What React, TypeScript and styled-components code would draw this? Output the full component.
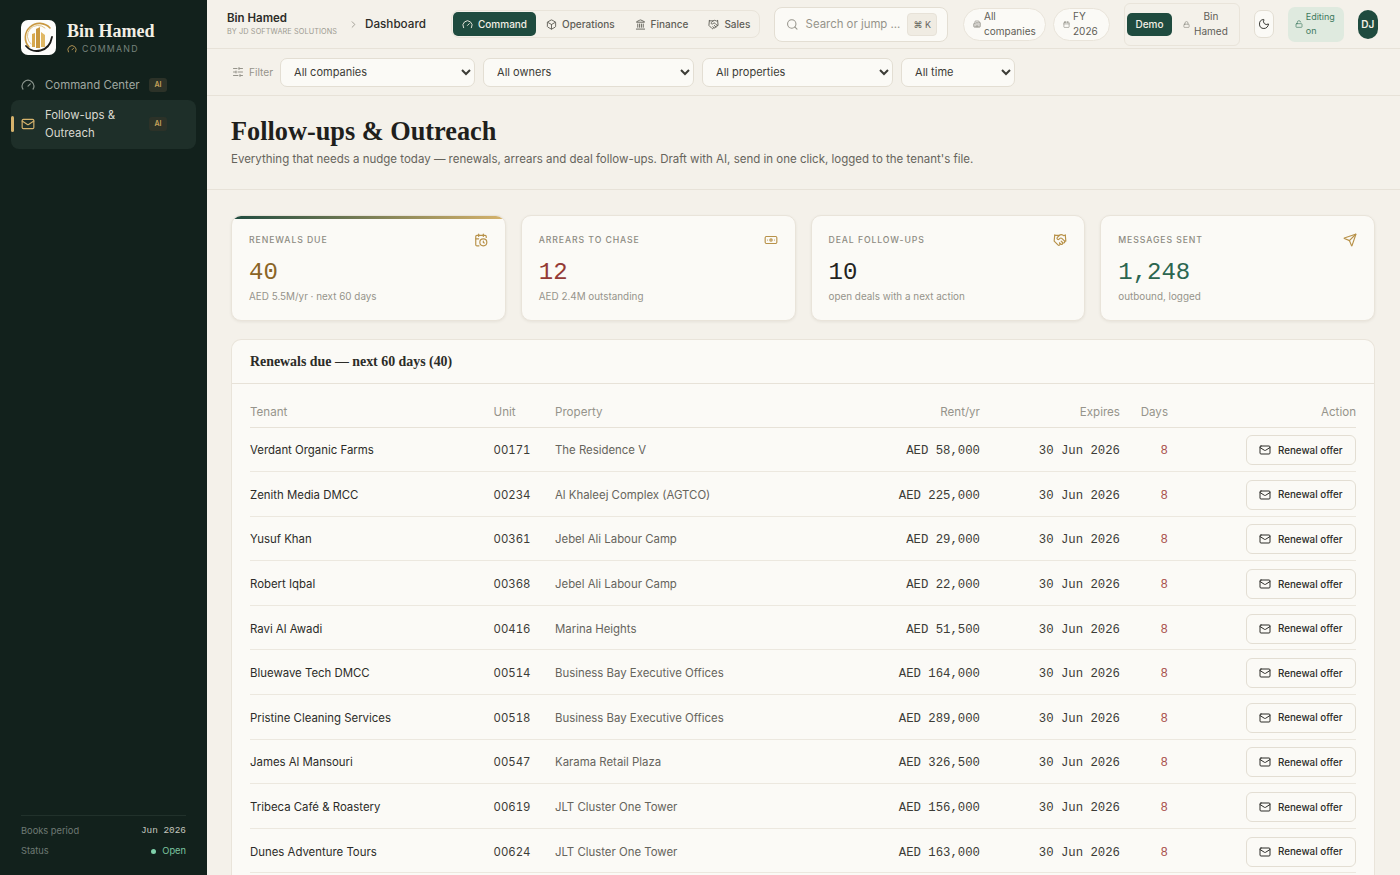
// libs
import React from 'react';
import styled, { createGlobalStyle } from 'styled-components';
import {
  Banknote,
  Box,
  Building2,
  Calendar,
  CalendarClock,
  ChevronRight,
  Gauge,
  Handshake,
  Landmark,
  Lock,
  LockOpen,
  Mail,
  Moon,
  Search,
  Send,
  SlidersHorizontal,
} from 'lucide-react';

const SANS = '"Inter", "Noto Sans", sans-serif';
const MONO = '"Liberation Mono", monospace';
const SERIF = '"Liberation Serif", serif';

const GlobalStyle = createGlobalStyle`
  html, body {
    margin: 0;
    height: 100%;
    overflow: hidden;
    background: #f4f1ea;
    font-family: ${SANS};
  }
  * { box-sizing: border-box; }
`;

const Shell = styled.div`
  display: flex;
  height: 100vh;
  overflow: hidden;
`;

/* Sidebar */
const Sidebar = styled.aside`
  width: 207px;
  flex: none;
  background: #12211c;
  display: flex;
  flex-direction: column;
  padding: 20px 11px 17px;
`;

const Brand = styled.div`
  display: flex;
  align-items: center;
  gap: 11px;
  padding: 0 10px;
  margin-bottom: 19px;
`;

const LogoBox = styled.div`
  width: 35px;
  height: 35px;
  border-radius: 7px;
  background: #fdfdfb;
  flex: none;
  overflow: hidden;
`;

const BrandName = styled.div`
  font-family: ${SERIF};
  font-weight: 700;
  font-size: 18px;
  line-height: 22px;
  color: #f3efe5;
`;

const BrandSub = styled.div`
  display: flex;
  align-items: center;
  gap: 5px;
  font-size: 8.8px;
  letter-spacing: 1.25px;
  line-height: 13px;
  color: #76817b;
  svg { color: #c9a45c; }
`;

const NavItem = styled.div<{ $active?: boolean }>`
  position: relative;
  display: flex;
  align-items: center;
  gap: 10px;
  padding: ${(p) => (p.$active ? '6px 10px' : '2px 10px')};
  border-radius: 8px;
  font-size: 11.4px;
  line-height: 18.5px;
  color: ${(p) => (p.$active ? '#d9d8cf' : '#a0a8a1')};
  background: ${(p) => (p.$active ? '#1e2f29' : 'transparent')};
  margin-bottom: 3px;
  svg { flex: none; color: ${(p) => (p.$active ? '#d6b36c' : '#8b958e')}; }
  ${(p) =>
    p.$active &&
    `&::before {
      content: '';
      position: absolute;
      left: 0;
      top: 16px;
      width: 3px;
      height: 16px;
      border-radius: 2px;
      background: #d6b36c;
    }`}
`;

const NavLabel = styled.span`
  flex: 1;
`;

const AiTag = styled.span`
  flex: none;
  width: 18px;
  margin: 0 19px 0 -6px;
  font-size: 7px;
  font-weight: 600;
  text-align: center;
  padding: 3px 0;
  border-radius: 3px;
  line-height: 8px;
  color: #c9a45c;
  background: #2c3228;
`;

const SideFoot = styled.div`
  margin: auto 10px 0;
  border-top: 1px solid #21312b;
  padding-top: 8px;
  display: flex;
  flex-direction: column;
  gap: 6px;
`;

const SideRow = styled.div`
  display: flex;
  justify-content: space-between;
  align-items: center;
  font-size: 9.3px;
  line-height: 14px;
  color: #6f7a74;
`;

const SideValue = styled.span`
  font-family: ${MONO};
  font-size: 9.4px;
  color: #c4c7bf;
`;

const OpenValue = styled.span`
  display: flex;
  align-items: center;
  gap: 6px;
  color: #7cc4a0;
  &::before {
    content: '';
    width: 5px;
    height: 5px;
    border-radius: 50%;
    background: #7fd0aa;
  }
`;

/* Main column */
const Main = styled.main`
  flex: 1;
  min-width: 0;
  display: flex;
  flex-direction: column;
  overflow: hidden;
`;

const TopBar = styled.header`
  height: 49px;
  flex: none;
  display: flex;
  align-items: center;
  padding: 0 22px 0 20px;
  border-bottom: 1px solid #e7e2d8;
`;

const Crumb = styled.div`
  width: 122px;
  flex: none;
`;

const CrumbTitle = styled.div`
  font-size: 11.5px;
  font-weight: 600;
  line-height: 13px;
  color: #2c2c28;
`;

const CrumbSub = styled.div`
  margin-top: 2px;
  font-size: 7.3px;
  line-height: 9px;
  letter-spacing: 0.1px;
  white-space: nowrap;
  color: #9c9a91;
`;

const CrumbArrow = styled(ChevronRight)`
  color: #9c9a91;
  margin: 0 6px 0 -1px;
  flex: none;
`;

const PageName = styled.div`
  font-size: 11.7px;
  font-weight: 500;
  color: #2c2c28;
  width: 86px;
  flex: none;
`;

const Tabs = styled.nav`
  display: flex;
  align-items: center;
  height: 28px;
  padding: 1px;
  border: 1px solid #e9e4da;
  border-radius: 8px;
  flex: none;
  width: 309px;
`;

const Tab = styled.div<{ $active?: boolean }>`
  display: flex;
  align-items: center;
  gap: 5px;
  height: 24px;
  padding: 0 ${(p) => (p.$active ? '9px' : '10px')};
  border-radius: 5px;
  font-size: 10px;
  font-weight: 500;
  color: ${(p) => (p.$active ? '#f3efe5' : '#5f5e57')};
  background: ${(p) => (p.$active ? '#1f4b3f' : 'transparent')};
`;

const SearchBox = styled.div`
  width: 174px;
  height: 35px;
  flex: none;
  margin-left: 14px;
  display: flex;
  align-items: center;
  gap: 7px;
  padding: 0 10px 0 11px;
  background: #fbfaf6;
  border: 1px solid #e3ded3;
  border-radius: 8px;
  color: #96948b;
  font-size: 11.4px;
`;

const SearchText = styled.span`
  flex: 1;
  white-space: nowrap;
`;

const Kbd = styled.span`
  padding: 5px 5px;
  background: #f0ece3;
  border: 1px solid #e7e2d8;
  border-radius: 4px;
  font-size: 9px;
  line-height: 11px;
  color: #66645c;
  white-space: nowrap;
`;

const Pill = styled.div<{ $first?: boolean; $w: number }>`
  width: ${(p) => p.$w}px;
  height: 33px;
  flex: none;
  margin-left: ${(p) => (p.$first ? '15px' : '7px')};
  display: flex;
  align-items: center;
  gap: 3px;
  padding-left: 9px;
  background: #fbfaf6;
  border: 1px solid #e9e4da;
  border-radius: 17px;
  font-size: 10px;
  line-height: 15px;
  color: #5f5e57;
  svg { flex: none; color: #85837a; }
`;

const ModeGroup = styled.div`
  height: 43px;
  flex: none;
  margin-left: 14px;
  display: flex;
  align-items: center;
  padding: 0 11px 0 2px;
  gap: 11px;
  border: 1px solid #e9e4da;
  border-radius: 6px;
`;

const DemoButton = styled.div`
  height: 23px;
  width: 45px;
  display: flex;
  align-items: center;
  justify-content: center;
  border-radius: 5px;
  background: #1f4b3f;
  color: #f3efe5;
  font-size: 10px;
  font-weight: 500;
`;

const ModeLock = styled.div`
  display: flex;
  align-items: center;
  gap: 4px;
  font-size: 10px;
  line-height: 15px;
  text-align: center;
  color: #5f5e57;
  svg { flex: none; color: #85837a; }
`;

const IconButton = styled.div`
  width: 20px;
  height: 28px;
  flex: none;
  margin-left: 14px;
  display: flex;
  align-items: center;
  justify-content: center;
  background: #fbfaf6;
  border: 1px solid #e3ded3;
  border-radius: 7px;
  color: #3c3c36;
`;

const EditingTag = styled.div`
  height: 35px;
  width: 56px;
  flex: none;
  margin-left: 14px;
  padding: 0 6px 0 7px;
  display: flex;
  align-items: center;
  gap: 3px;
  border-radius: 7px;
  background: #dfeadf;
  color: #3f7a60;
  font-size: 9px;
  line-height: 14px;
`;

const Avatar = styled.div`
  width: 20px;
  height: 29px;
  flex: none;
  margin-left: 14px;
  display: flex;
  align-items: center;
  justify-content: center;
  border-radius: 10px;
  background: #1f4b3f;
  color: #f3efe5;
  font-size: 10px;
  font-weight: 600;
`;

const FilterBar = styled.div`
  height: 47px;
  flex: none;
  display: flex;
  align-items: center;
  gap: 8px;
  padding: 0 24px;
  border-bottom: 1px solid #e7e2d8;
`;

const FilterLabel = styled.div`
  display: flex;
  align-items: center;
  gap: 5px;
  margin: 0 -1px 0 1px;
  font-size: 10.2px;
  color: #96948b;
`;

const Select = styled.select<{ $w: number }>`
  width: ${(p) => p.$w}px;
  height: 29px;
  padding: 0 7px 0 9px;
  font-family: ${SANS};
  font-size: 11px;
  color: #3c3c36;
  background-color: #fbfaf6;
  border: 1px solid #e3ded3;
  border-radius: 7px;
`;

const PageHead = styled.div`
  height: 94px;
  flex: none;
  padding: 20px 24px 0;
  border-bottom: 1px solid #e7e2d8;
`;

const Title = styled.h1`
  margin: 0 0 2px;
  font-family: ${SERIF};
  font-weight: 700;
  font-size: 26.3px;
  line-height: 32px;
  color: #1f1f1c;
`;

const Subtitle = styled.p`
  margin: 0;
  font-size: 11.5px;
  line-height: 18px;
  color: #66645c;
`;

const Content = styled.div`
  flex: 1;
  min-height: 0;
  padding: 25px 25px 0 24px;
  display: flex;
  flex-direction: column;
  gap: 18px;
`;

const Stats = styled.section`
  display: grid;
  grid-template-columns: repeat(4, 1fr);
  gap: 15px;
`;

const StatCard = styled.div<{ $accent?: boolean }>`
  position: relative;
  height: 106px;
  padding: 19px 17px 0;
  background: #fbfaf6;
  border: 1px solid #e9e4da;
  border-radius: 10px;
  box-shadow: 0 1px 3px rgba(60, 50, 30, 0.08);
  overflow: hidden;
  ${(p) =>
    p.$accent &&
    `&::before {
      content: '';
      position: absolute;
      left: 0;
      right: 0;
      top: 0;
      height: 3px;
      background: linear-gradient(90deg, #1f4b3f, #d6b36c);
    }`}
`;

const StatTop = styled.div`
  display: flex;
  justify-content: space-between;
  align-items: flex-start;
  svg { color: #b8924a; margin-top: -2px; }
`;

const StatLabel = styled.div`
  font-size: 8.7px;
  font-weight: 500;
  letter-spacing: 0.9px;
  line-height: 11px;
  color: #8d8b82;
`;

const StatValue = styled.div<{ $color: string }>`
  margin-top: 11px;
  font-family: ${MONO};
  font-size: 24px;
  line-height: 30px;
  color: ${(p) => p.$color};
`;

const StatNote = styled.div`
  margin-top: 1px;
  font-size: 9.9px;
  line-height: 14px;
  color: #96948b;
`;

const TablePanel = styled.section`
  flex: 1;
  min-height: 0;
  background: #fbfaf6;
  border: 1px solid #e9e4da;
  border-bottom: 0;
  border-radius: 10px 10px 0 0;
  overflow: hidden;
`;

const PanelHead = styled.div`
  height: 44px;
  padding: 0 18px;
  display: flex;
  align-items: center;
  font-family: ${SERIF};
  font-weight: 700;
  font-size: 13.9px;
  color: #2c2c28;
  border-bottom: 1px solid #e7e2d8;
`;

const TableWrap = styled.div`
  padding: 9px 18px 0;
`;

const Table = styled.table`
  width: 100%;
  border-collapse: collapse;
  table-layout: fixed;
`;

const Th = styled.th<{ $right?: boolean; $w: number }>`
  width: ${(p) => p.$w}px;
  height: 34px;
  padding: 0 0 8px;
  vertical-align: bottom;
  font-size: 11.6px;
  font-weight: 400;
  color: #96948b;
  text-align: ${(p) => (p.$right ? 'right' : 'left')};
  border-bottom: 1px solid #e7e2d8;
`;

const Td = styled.td<{ $right?: boolean }>`
  height: 44.6px;
  padding: 2px 0 0;
  font-size: 11.4px;
  color: #66645c;
  text-align: ${(p) => (p.$right ? 'right' : 'left')};
  border-bottom: 1px solid #ece8df;
`;

const TenantCell = styled(Td)`
  color: #2c2c28;
`;

const UnitCell = styled(Td)`
  color: #3c3c36;
  font-variant-numeric: tabular-nums;
`;

const MonoCell = styled(Td)`
  padding-top: 4px;
  font-family: ${MONO};
  font-size: 12.3px;
  color: #3c3c36;
  white-space: nowrap;
`;

const DaysCell = styled(MonoCell)`
  color: #a8504c;
`;

const OfferButton = styled.button`
  display: inline-flex;
  align-items: center;
  gap: 7px;
  height: 30px;
  width: 110px;
  padding: 0 12px;
  vertical-align: middle;
  background: #fbfaf6;
  border: 1px solid #e3ded3;
  border-radius: 6px;
  font-family: ${SANS};
  font-size: 9.8px;
  font-weight: 500;
  white-space: nowrap;
  color: #2c2c28;
`;

const LogoMark = () => (
  <svg width="35" height="35" viewBox="0 0 35 35" fill="none">
    <path d="M8 27A13.5 13.5 0 0 1 29 8" stroke="#c9983f" strokeWidth="1.6" strokeLinecap="round" />
    <path d="M10 24A10 10 0 0 1 24 8" stroke="#e0c488" strokeWidth="1" strokeLinecap="round" />
    <path d="M5 26C12 34 28 33 31 17" stroke="#1c1c1a" strokeWidth="1.8" strokeLinecap="round" />
    <path d="M11 27V14l3-1v14z" fill="#d8a94f" />
    <path d="M15 28V9l4-2v21z" fill="#c9983f" />
    <path d="M20 27V12l4 3v12z" fill="#e0b865" />
  </svg>
);

const STATS = [
  { label: 'RENEWALS DUE', value: '40', note: 'AED 5.5M/yr · next 60 days', color: '#8a6426', Icon: CalendarClock, accent: true },
  { label: 'ARREARS TO CHASE', value: '12', note: 'AED 2.4M outstanding', color: '#943a35', Icon: Banknote },
  { label: 'DEAL FOLLOW-UPS', value: '10', note: 'open deals with a next action', color: '#24241f', Icon: Handshake },
  { label: 'MESSAGES SENT', value: '1,248', note: 'outbound, logged', color: '#2b6650', Icon: Send },
];

const RENEWALS = [
  ['Verdant Organic Farms', '00171', 'The Residence V', 'AED 58,000'],
  ['Zenith Media DMCC', '00234', 'Al Khaleej Complex (AGTCO)', 'AED 225,000'],
  ['Yusuf Khan', '00361', 'Jebel Ali Labour Camp', 'AED 29,000'],
  ['Robert Iqbal', '00368', 'Jebel Ali Labour Camp', 'AED 22,000'],
  ['Ravi Al Awadi', '00416', 'Marina Heights', 'AED 51,500'],
  ['Bluewave Tech DMCC', '00514', 'Business Bay Executive Offices', 'AED 164,000'],
  ['Pristine Cleaning Services', '00518', 'Business Bay Executive Offices', 'AED 289,000'],
  ['James Al Mansouri', '00547', 'Karama Retail Plaza', 'AED 326,500'],
  ['Tribeca Café & Roastery', '00619', 'JLT Cluster One Tower', 'AED 156,000'],
  ['Dunes Adventure Tours', '00624', 'JLT Cluster One Tower', 'AED 163,000'],
];

const App = () => (
  <Shell>
    <GlobalStyle />
    <Sidebar>
      <Brand>
        <LogoBox><LogoMark /></LogoBox>
        <div>
          <BrandName>Bin Hamed</BrandName>
          <BrandSub><Gauge size={10} />COMMAND</BrandSub>
        </div>
      </Brand>
      <NavItem>
        <Gauge size={14} />
        <NavLabel>Command Center</NavLabel>
        <AiTag>AI</AiTag>
      </NavItem>
      <NavItem $active>
        <Mail size={14} />
        <NavLabel>Follow-ups &amp; Outreach</NavLabel>
        <AiTag>AI</AiTag>
      </NavItem>
      <SideFoot>
        <SideRow>Books period<SideValue>Jun 2026</SideValue></SideRow>
        <SideRow>Status<OpenValue>Open</OpenValue></SideRow>
      </SideFoot>
    </Sidebar>

    <Main>
      <TopBar>
        <Crumb>
          <CrumbTitle>Bin Hamed</CrumbTitle>
          <CrumbSub>BY JD SOFTWARE SOLUTIONS</CrumbSub>
        </Crumb>
        <CrumbArrow size={11} />
        <PageName>Dashboard</PageName>
        <Tabs>
          <Tab $active><Gauge size={11} />Command</Tab>
          <Tab><Box size={11} />Operations</Tab>
          <Tab><Landmark size={11} />Finance</Tab>
          <Tab><Handshake size={11} />Sales</Tab>
        </Tabs>
        <SearchBox>
          <Search size={13} />
          <SearchText>Search or jump ...</SearchText>
          <Kbd>⌘ K</Kbd>
        </SearchBox>
        <Pill $first $w={83}><Building2 size={8} /><span>All<br />companies</span></Pill>
        <Pill $w={57}><Calendar size={7} /><span>FY<br />2026</span></Pill>
        <ModeGroup>
          <DemoButton>Demo</DemoButton>
          <ModeLock><Lock size={7} /><span>Bin<br />Hamed</span></ModeLock>
        </ModeGroup>
        <IconButton><Moon size={12} /></IconButton>
        <EditingTag><LockOpen size={8} /><span>Editing<br />on</span></EditingTag>
        <Avatar>DJ</Avatar>
      </TopBar>

      <FilterBar>
        <FilterLabel><SlidersHorizontal size={12} />Filter</FilterLabel>
        <Select $w={195} defaultValue="All companies"><option>All companies</option></Select>
        <Select $w={211} defaultValue="All owners"><option>All owners</option></Select>
        <Select $w={191} defaultValue="All properties"><option>All properties</option></Select>
        <Select $w={114} defaultValue="All time"><option>All time</option></Select>
      </FilterBar>

      <PageHead>
        <Title>Follow-ups &amp; Outreach</Title>
        <Subtitle>Everything that needs a nudge today — renewals, arrears and deal follow-ups. Draft with AI, send in one click, logged to the tenant's file.</Subtitle>
      </PageHead>

      <Content>
        <Stats>
          {STATS.map(({ label, value, note, color, Icon, accent }) => (
            <StatCard key={label} $accent={accent}>
              <StatTop>
                <StatLabel>{label}</StatLabel>
                <Icon size={14} />
              </StatTop>
              <StatValue $color={color}>{value}</StatValue>
              <StatNote>{note}</StatNote>
            </StatCard>
          ))}
        </Stats>

        <TablePanel>
          <PanelHead>Renewals due — next 60 days (40)</PanelHead>
          <TableWrap>
            <Table>
              <thead>
                <tr>
                  <Th $w={243.5}>Tenant</Th>
                  <Th $w={61.5}>Unit</Th>
                  <Th $w={240}>Property</Th>
                  <Th $w={185} $right>Rent/yr</Th>
                  <Th $w={140} $right>Expires</Th>
                  <Th $w={48} $right>Days</Th>
                  <Th $w={188} $right>Action</Th>
                </tr>
              </thead>
              <tbody>
                {RENEWALS.map(([tenant, unit, property, rent]) => (
                  <tr key={unit}>
                    <TenantCell>{tenant}</TenantCell>
                    <UnitCell>{unit}</UnitCell>
                    <Td>{property}</Td>
                    <MonoCell $right>{rent}</MonoCell>
                    <MonoCell $right>30 Jun 2026</MonoCell>
                    <DaysCell $right>8</DaysCell>
                    <Td $right>
                      <OfferButton><Mail size={12} />Renewal offer</OfferButton>
                    </Td>
                  </tr>
                ))}
              </tbody>
            </Table>
          </TableWrap>
        </TablePanel>
      </Content>
    </Main>
  </Shell>
);

export default App;
